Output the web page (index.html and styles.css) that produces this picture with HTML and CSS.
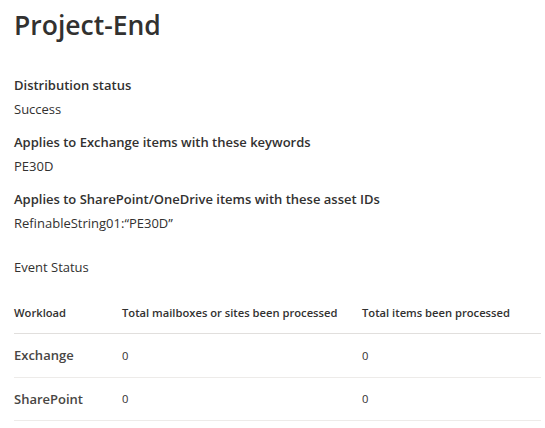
FILE: index.html
```html
<!DOCTYPE html>
<html>
<head>
<meta charset="utf-8">
<link rel="stylesheet" href="styles.css">
</head>
<body>
<div class="page">
  <h1 class="title">Project-End</h1>
  <div class="fields">
    <div class="field">
      <div class="label">Distribution status</div>
      <div class="value">Success</div>
    </div>
    <div class="field">
      <div class="label">Applies to Exchange items with these keywords</div>
      <div class="value">PE30D</div>
    </div>
    <div class="field">
      <div class="label">Applies to SharePoint/OneDrive items with these asset IDs</div>
      <div class="value">RefinableString01:“PE30D”</div>
    </div>
  </div>
  <div class="section">Event Status</div>
  <div class="table">
    <div class="row head">
      <div class="c1">Workload</div>
      <div class="c2">Total mailboxes or sites been processed</div>
      <div class="c3">Total items been processed</div>
    </div>
    <div class="row">
      <div class="c1 name">Exchange</div>
      <div class="c2 num">0</div>
      <div class="c3 num">0</div>
    </div>
    <div class="row">
      <div class="c1 name">SharePoint</div>
      <div class="c2 num">0</div>
      <div class="c3 num">0</div>
    </div>
  </div>
</div>
</body>
</html>
```
FILE: styles.css
```css
html, body {
  margin: 0;
  padding: 0;
  background: #ffffff;
}
body {
  font-family: "Segoe UI", "Open Sans", "Liberation Sans", sans-serif;
  color: #323130;
}
.page {
  padding: 0 4px 0 14px;
}
.title {
  margin: 0;
  padding-top: 7px;
  font-size: 26.5px;
  line-height: 36px;
  font-weight: 600;
}
.fields {
  margin-top: 30px;
  display: flex;
  flex-direction: column;
  gap: 9px;
}
.label {
  font-size: 13px;
  line-height: 24px;
  font-weight: 600;
}
.value {
  font-size: 13px;
  line-height: 24px;
}
.section {
  margin-top: 20px;
  font-size: 13px;
  line-height: 24px;
}
.table {
  margin-top: 13px;
}
.row {
  box-sizing: border-box;
  display: flex;
  height: 43.5px;
  align-items: center;
  border-bottom: 1px solid #edebe9;
}
.row.head {
  height: 42px;
  border-bottom-color: #e1dfdd;
  font-size: 11.2px;
  font-weight: 600;
}
.c1 { width: 108px; }
.c2 { width: 240px; }
.c3 { flex: 1; }
.name {
  font-size: 13px;
  font-weight: 600;
  color: #484644;
}
.num {
  font-size: 11.2px;
}
```
